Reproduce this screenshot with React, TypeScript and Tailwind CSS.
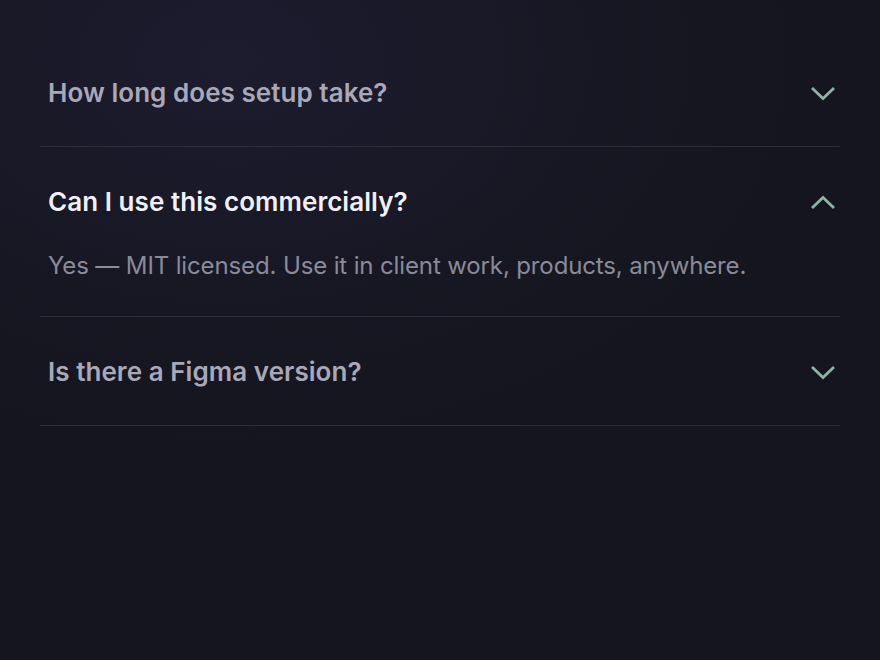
import { useState } from "react";

const faqs = [
  {
    q: "How long does setup take?",
    a: "About five minutes — install, import, and you're ready to go.",
  },
  {
    q: "Can I use this commercially?",
    a: "Yes — MIT licensed. Use it in client work, products, anywhere.",
  },
  {
    q: "Is there a Figma version?",
    a: "Yes, a matching Figma kit is included with every download.",
  },
];

function Chevron({ up }: { up: boolean }) {
  return (
    <svg
      width="26"
      height="15"
      viewBox="0 0 26 15"
      fill="none"
      stroke="#8db3a3"
      strokeWidth="2.8"
      strokeLinecap="butt"
      strokeLinejoin="miter"
      className="shrink-0"
    >
      {up ? <polyline points="2,13 13,2.5 24,13" /> : <polyline points="2,2 13,12.5 24,2" />}
    </svg>
  );
}

export default function App() {
  const [open, setOpen] = useState(1);
  return (
    <div
      className="min-h-[660px] w-full bg-[#15151d] bg-[radial-gradient(ellipse_620px_420px_at_230px_60px,#1d1c2f_0%,#181826_45%,#15151d_100%)] px-10 pt-[38px]"
      style={{ fontFamily: "Inter, 'Noto Sans', sans-serif" }}
    >
      {/* === FAQ LIST === */}
      <div className="w-full">
        {faqs.map((item, i) => {
          const isOpen = open === i;
          return (
            <div key={item.q} className="border-b-[1.5px] border-[#2c2f37]">
              <button
                type="button"
                onClick={() => setOpen(isOpen ? -1 : i)}
                className={`flex w-full items-center justify-between pl-2 pr-[4px] pt-[41px] text-left ${
                  isOpen ? "pb-[36px]" : "pb-[39px]"
                }`}
              >
                <span
                  className={`text-[26px] leading-7 font-semibold tracking-[0.05px] ${
                    isOpen ? "text-[#f1f0f7]" : "text-[#a9a8b9]"
                  }`}
                >
                  {item.q}
                </span>
                <Chevron up={isOpen} />
              </button>
              {isOpen && (
                <p className="pl-2 pb-9 text-[24px] leading-7 tracking-[-0.13px] text-[#8a8a99]">
                  {item.a}
                </p>
              )}
            </div>
          );
        })}
      </div>
    </div>
  );
}
